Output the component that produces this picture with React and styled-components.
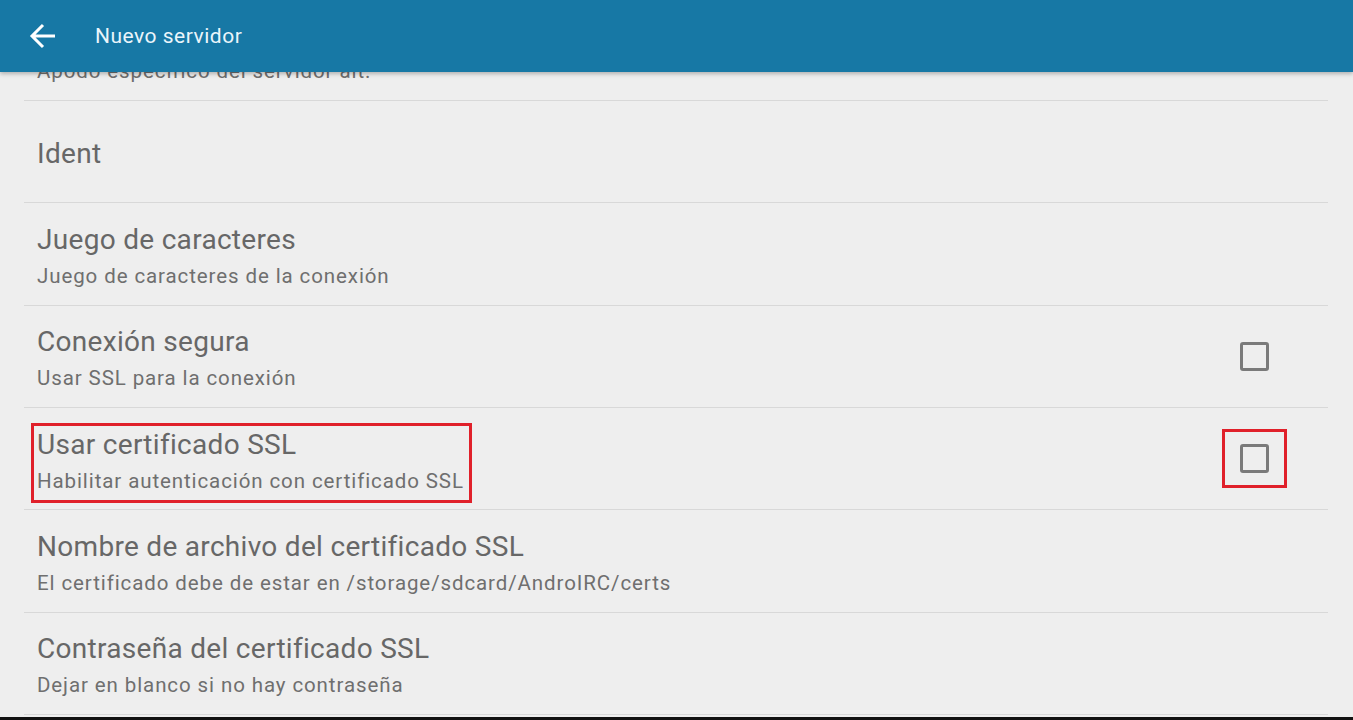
import React from "react";
import styled, { createGlobalStyle } from "styled-components";

const GlobalStyle = createGlobalStyle`
  html, body {
    margin: 0;
    padding: 0;
    background: #eeeeee;
    font-family: Roboto, "Noto Sans", sans-serif;
  }
`;

const Screen = styled.div`
  position: relative;
  width: 1353px;
  height: 720px;
  overflow: hidden;
  background: #eeeeee;
  border-bottom: 3px solid #111;
  box-sizing: border-box;
`;

const AppBar = styled.div`
  position: absolute;
  top: 0;
  left: 0;
  right: 0;
  z-index: 2;
  height: 72px;
  background: #1778a5;
  display: flex;
  align-items: center;
  box-shadow: 0 2px 4px rgba(0, 0, 0, 0.25);
`;

const BackButton = styled.div`
  width: 95px;
  display: flex;
  align-items: center;
  padding-left: 28px;
  box-sizing: border-box;
`;

const BarTitle = styled.div`
  color: #eaf5fb;
  font-size: 21px;
  letter-spacing: 0.5px;
`;

const List = styled.div`
  margin: -1.4px 25px 0 24px;
`;

const Row = styled.div`
  height: 101.33px;
  border-bottom: 1px solid #d8d8d8;
  display: flex;
  align-items: center;
  justify-content: space-between;
  padding: 0 59px 0 13px;
`;

const TextBlock = styled.div`
  display: flex;
  flex-direction: column;
  justify-content: flex-start;
  box-sizing: border-box;
  padding: ${(p) => (p.marked ? "2px 5px 0 3px" : "4px 0 0 0")};
  margin: ${(p) => (p.marked ? "9px 0 0 -6px" : "0")};
  border: ${(p) => (p.marked ? "3px solid #e0202a" : "none")};
  height: ${(p) => (p.marked ? "80px" : "auto")};
`;

const Title = styled.div`
  min-height: 34px;
  font-size: 28px;
  line-height: 34px;
  letter-spacing: 0.3px;
  color: #676767;
  white-space: nowrap;
`;

const Subtitle = styled.div`
  font-size: 20.5px;
  line-height: 26px;
  margin-top: 6px;
  letter-spacing: 0.9px;
  color: #6f6f6f;
  white-space: nowrap;
`;

const CheckWrap = styled.div`
  width: 65px;
  height: 59px;
  margin-right: -18px;
  display: flex;
  align-items: center;
  justify-content: center;
  box-sizing: border-box;
  border: ${(p) => (p.marked ? "3px solid #e0202a" : "3px solid transparent")};
`;

const Box = styled.div`
  width: 29px;
  height: 29px;
  box-sizing: border-box;
  border: 3px solid #7a7a7a;
  border-radius: 3px;
`;

// first row is scrolled under the app bar: only its subtitle peeks out
const items = [
  { title: "", subtitle: "Apodo específico del servidor alt." },
  { title: "Ident" },
  { title: "Juego de caracteres", subtitle: "Juego de caracteres de la conexión" },
  { title: "Conexión segura", subtitle: "Usar SSL para la conexión", check: true },
  {
    title: "Usar certificado SSL",
    subtitle: "Habilitar autenticación con certificado SSL",
    check: true,
    marked: true,
  },
  {
    title: "Nombre de archivo del certificado SSL",
    subtitle: "El certificado debe de estar en /storage/sdcard/AndroIRC/certs",
  },
  { title: "Contraseña del certificado SSL", subtitle: "Dejar en blanco si no hay contraseña" },
];

export default function App() {
  return (
    <Screen>
      <GlobalStyle />
      <AppBar>
        <BackButton>
          <svg width="30" height="28" viewBox="0 0 30 28" fill="none">
            <path d="M27 14H4M15 3L4 14l11 11" stroke="#ffffff" strokeWidth="3" />
          </svg>
        </BackButton>
        <BarTitle>Nuevo servidor</BarTitle>
      </AppBar>
      <List>
        {items.map((it, i) => (
          <Row key={i}>
            <TextBlock marked={it.marked}>
              <Title>{it.title}</Title>
              {it.subtitle && <Subtitle>{it.subtitle}</Subtitle>}
            </TextBlock>
            {it.check && (
              <CheckWrap marked={it.marked}>
                <Box />
              </CheckWrap>
            )}
          </Row>
        ))}
      </List>
    </Screen>
  );
}
